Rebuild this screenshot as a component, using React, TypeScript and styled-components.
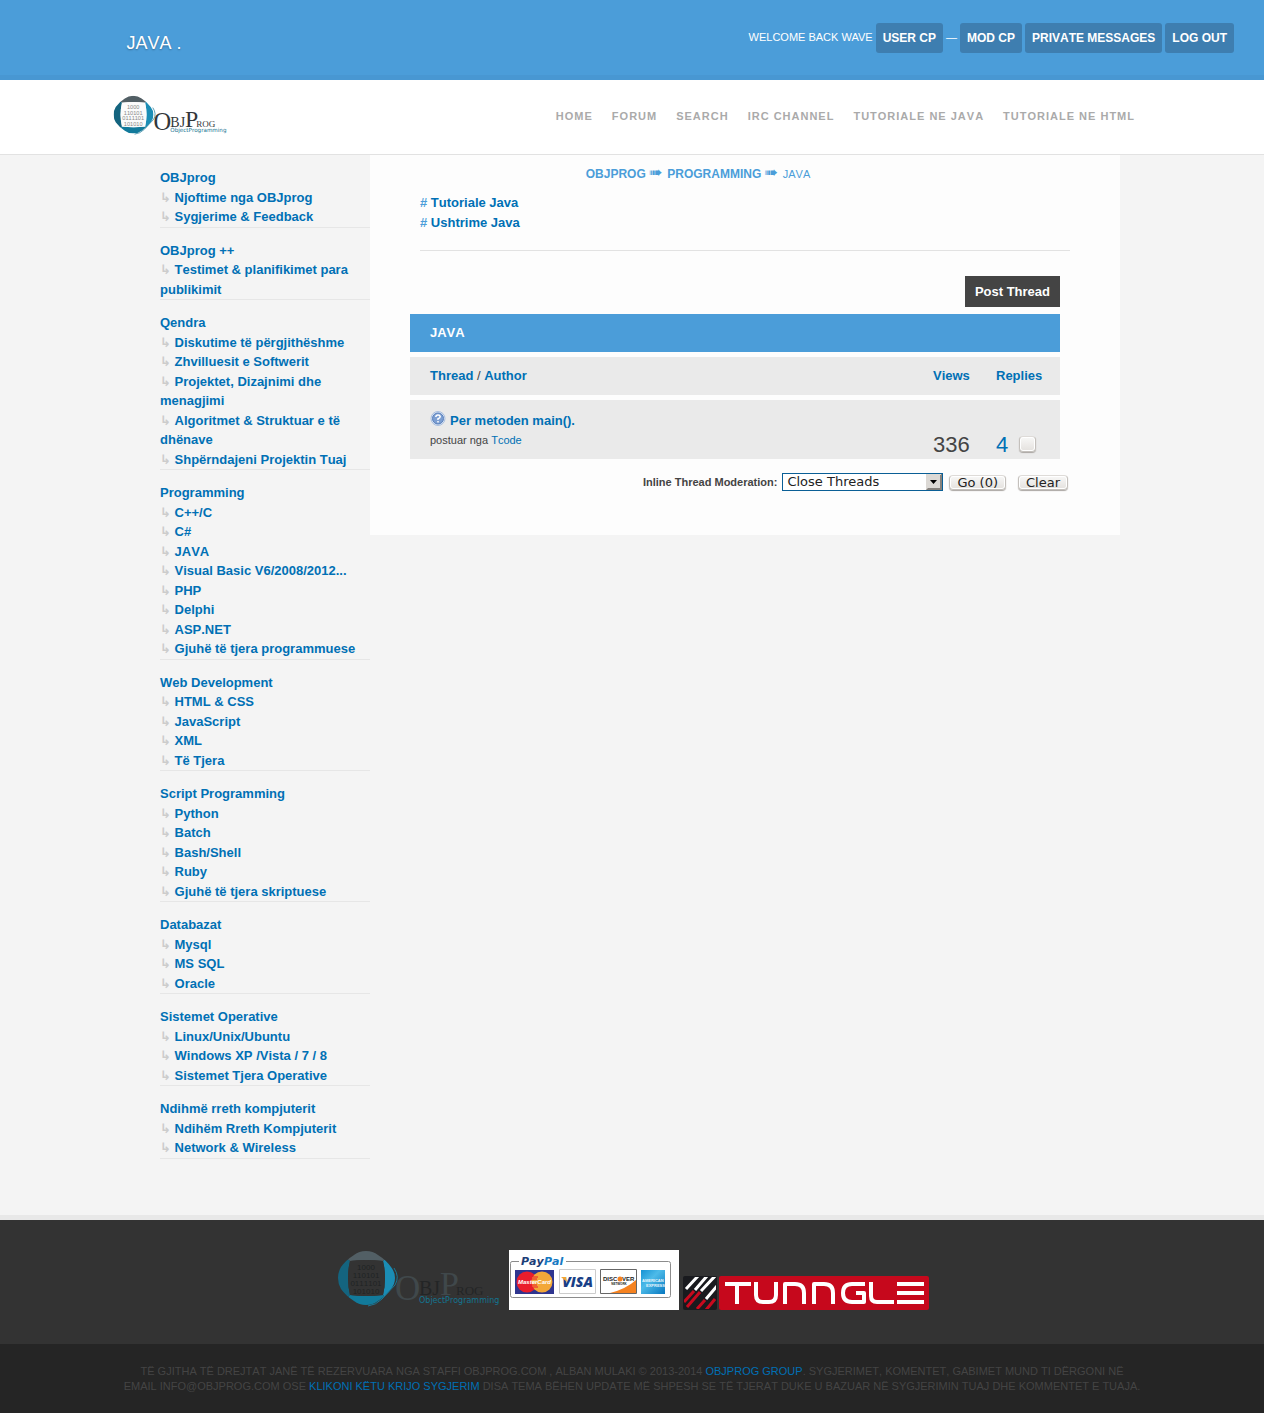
import React from 'react';
import styled, { createGlobalStyle } from 'styled-components';

const blue = '#4b9dd9';
const link = '#0070b5';

const GlobalStyle = createGlobalStyle`
  body {
    margin: 0;
    background: #f4f4f4;
    color: #444;
    font: 13px/1.5 "Liberation Sans", Arial, "DejaVu Sans", sans-serif;
    font-kerning: none;
  }
  a { color: ${link}; text-decoration: none; }
`;

const TopBar = styled.header`
  display: flex;
  justify-content: space-between;
  align-items: center;
  box-sizing: border-box;
  height: 80px;
  padding: 0 30px 0 10%;
  background: ${blue};
  border-bottom: 5px solid #4897d2;
  color: #fff;
`;

const PageTitle = styled.h1`
  margin: 0;
  padding-top: 11px;
  font-size: 18px;
  font-weight: normal;
  text-shadow: 0 1px 2px rgba(0, 0, 0, 0.3);
`;

const UserPanel = styled.div`
  display: flex;
  align-items: center;
  gap: 3px;
  font-size: 11px;
  text-transform: uppercase;
`;

const Welcome = styled.span`
  font-kerning: normal;
`;

const PanelLink = styled.a`
  padding: 0 7px;
  border-radius: 3px;
  background: #3e7eb0;
  color: #fff;
  font-size: 12px;
  font-weight: bold;
  line-height: 30px;
`;

const NavBar = styled.div`
  background: #fff;
  border-bottom: 1px solid #e2e2e2;
`;

const NavInner = styled.div`
  display: flex;
  justify-content: space-between;
  align-items: flex-start;
  box-sizing: border-box;
  max-width: 1042px;
  min-height: 74px;
  margin: 0 auto;
  padding: 15px 18px 0 0;
`;

const NavList = styled.nav`
  display: flex;
  gap: 19px;
  padding-top: 13px;
  a {
    color: #aaa;
    font-size: 11px;
    font-weight: bold;
    letter-spacing: 1px;
    text-transform: uppercase;
  }
`;

const Main = styled.main`
  display: flex;
  align-items: flex-start;
  box-sizing: border-box;
  max-width: 1040px;
  margin: 0 auto;
  padding: 0 32px 56px 48px;
`;

const Sidebar = styled.aside`
  flex: 0 0 210px;
  font-weight: bold;
`;

const Group = styled.section`
  padding-top: 13px;
  border-bottom: 1px solid #e6e6e6;
`;

const GroupTitle = styled.h2`
  margin: 0;
  font-size: 13px;
`;

const ForumList = styled.ul`
  margin: 0;
  padding: 0;
  list-style: none;
`;

const Branch = styled.span`
  color: #ccc;
`;

const Content = styled.div`
  flex: 1;
  box-sizing: border-box;
  min-height: 380px;
  padding: 8px 50px 40px;
  background: #fdfdfd;
`;

const Breadcrumb = styled.nav`
  padding-right: 94px;
  color: ${blue};
  font-size: 11px;
  line-height: 20px;
  text-align: center;
  text-transform: uppercase;
  a { color: ${blue}; font-size: 12px; font-weight: bold; }
`;

const Pointer = styled.span`
  margin-right: 2px;
  font: 16px/20px "DejaVu Sans", sans-serif;
`;

const Subforums = styled.ul`
  margin: 0;
  padding: 9px 0 17px;
  border-bottom: 1px solid #e2e2e2;
  list-style: none;
  color: ${blue};
  font-weight: bold;
  line-height: 20px;
`;

const Board = styled.div`
  margin: 25px 10px 0 -10px;
`;

const Actions = styled.div`
  display: flex;
  justify-content: flex-end;
`;

const PostButton = styled.a`
  padding: 0 10px;
  background: #444;
  color: #fff;
  font-weight: bold;
  line-height: 31px;
`;

const Threads = styled.table`
  width: 100%;
  margin-top: 2px;
  border-spacing: 0 5px;
  text-align: left;
  td, th { padding: 0; background: #eaeaea; font-weight: normal; }
  th { height: 38px; }
  th:first-child, td:first-child { padding-left: 20px; }
  tbody td { height: 59px; vertical-align: bottom; }
`;

const BoardHead = styled.tr`
  && th { background: ${blue}; color: #fff; font-weight: bold; }
`;

const NumberCol = styled.col`
  width: ${(p: { $w: number }) => p.$w}px;
`;

const Subject = styled.div`
  display: flex;
  gap: 4px;
  line-height: 20px;
  font-weight: bold;
`;

const Author = styled.div`
  padding-bottom: 10px;
  font-size: 11px;
  line-height: 18px;
`;

const Count = styled.div`
  display: flex;
  align-items: center;
  gap: 11px;
  font-size: 22px;
  line-height: 28px;
`;

const raised = `
  border: 1px solid #c4c0bc;
  border-top-color: #dedbd8;
  background: linear-gradient(#f8f8f7, #e4e1de);
  box-shadow: inset 0 0 0 1px #fff, 0 1px 1px #aaa6a2;
`;

const Tick = styled.input`
  appearance: none;
  box-sizing: border-box;
  width: 17px;
  height: 16px;
  margin: 0 0 3px;
  border-radius: 4px;
  ${raised}
  &:checked { background: ${blue}; }
`;

const Moderation = styled.form`
  display: flex;
  justify-content: flex-end;
  align-items: center;
  margin: 9px -8px 0 0;
`;

const ModLabel = styled.label`
  margin-right: 5px;
  font-size: 11px;
  font-weight: bold;
`;

const SelectBox = styled.div`
  position: relative;
  width: 161px;
  margin-right: 6px;
`;

const Select = styled.select`
  appearance: none;
  display: block;
  box-sizing: border-box;
  width: 100%;
  height: 18px;
  padding: 0 4px;
  border: 1px solid #0a5f96;
  border-radius: 0;
  background: #fff;
  color: #222;
  font: 13px/16px "DejaVu Sans", sans-serif;
`;

const SelectArrow = styled.svg`
  position: absolute;
  top: 1px;
  right: 1px;
  pointer-events: none;
`;

const ModButton = styled.button`
  height: 15px;
  margin-left: ${(p: { $gap?: number }) => p.$gap || 0}px;
  padding: 0 7px;
  border-radius: 4px;
  color: #222;
  font: 13px/13px "DejaVu Sans", sans-serif;
  ${raised}
`;

const Footer = styled.footer`
  background: #333;
  border-top: 5px solid #e8e8e8;
`;

const Partners = styled.div`
  display: flex;
  justify-content: center;
  align-items: flex-end;
  gap: 4px;
  padding: 30px 0 34px;
  svg { display: block; }
`;

const TunngleLogo = styled.svg`
  flex: none;
`;

const Legal = styled.div`
  padding: 20px 100px 19px;
  background: #252525;
  color: #444;
  font-size: 11px;
  line-height: 15px;
  text-align: center;
  text-transform: uppercase;
  p { max-width: 1040px; margin: 0 auto; }
`;

const groups: [string, string[]][] = [
  ['OBJprog', ['Njoftime nga OBJprog', 'Sygjerime & Feedback']],
  ['OBJprog ++', ['Testimet & planifikimet para publikimit']],
  ['Qendra', ['Diskutime të përgjithëshme', 'Zhvilluesit e Softwerit', 'Projektet, Dizajnimi dhe menagjimi', 'Algoritmet & Struktuar e të dhënave', 'Shpërndajeni Projektin Tuaj']],
  ['Programming', ['C++/C', 'C#', 'JAVA', 'Visual Basic V6/2008/2012...', 'PHP', 'Delphi', 'ASP.NET', 'Gjuhë të tjera programmuese']],
  ['Web Development', ['HTML & CSS', 'JavaScript', 'XML', 'Të Tjera']],
  ['Script Programming', ['Python', 'Batch', 'Bash/Shell', 'Ruby', 'Gjuhë të tjera skriptuese']],
  ['Databazat', ['Mysql', 'MS SQL', 'Oracle']],
  ['Sistemet Operative', ['Linux/Unix/Ubuntu', 'Windows XP /Vista / 7 / 8', 'Sistemet Tjera Operative']],
  ['Ndihmë rreth kompjuterit', ['Ndihëm Rreth Kompjuterit', 'Network & Wireless']],
];

const navItems = ['Home', 'Forum', 'Search', 'IRC Channel', 'Tutoriale ne Java', 'Tutoriale ne HTML'];

function Logo({ width, height, dark }: { width: number; height: number; dark?: boolean }) {
  const ink = dark ? '#232526' : '#33373a';
  const capital = dark ? '#40484b' : '#33373a';
  const id = dark ? 'core-dark' : 'core-light';
  return (
    <svg width={width} height={height} viewBox="0 0 170 60" role="img" aria-label="ObjProg">
      <defs>
        <clipPath id={id}>
          <path d="M31 1Q38 1 43 5Q51 10 56 17Q60 22 60 28T56 39Q51 46 43 51Q38 55 31 55T19 51Q11 46 6 39Q3 34 3 28T6 17Q11 10 19 5Q24 1 31 1z" />
        </clipPath>
      </defs>
      <g clipPath={`url(#${id})`}>
        <path d="M0 0h62L48 11Q31 9 15 11z" fill="#525f65" />
        <path d="M0 0l15 11q-4 17 0 34L0 58z" fill="#14647f" />
        <path d="M62 0L48 11q4 17 0 34l14 13z" fill="#1b8db5" />
        <path d="M0 60l15-15q17 2 33 0l14 15z" fill="#127a9b" />
        <path d="M15 11q16-2 33 0 4 17 0 34-17 2-33 0-4-17 0-34z" fill={dark ? '#333' : '#fbfbfb'} />
      </g>
      <path d="M59 18q6 9 1 17L47 49q-6 6-14 7" fill="none" stroke="#1b7896" strokeWidth="1" />
      <g fill={dark ? '#202324' : '#888'} fontFamily="'Liberation Sans', sans-serif" fontSize="8" textAnchor="middle">
        <text x="31" y="20">1000</text>
        <text x="31" y="28">110101</text>
        <text x="31" y="36">0111101</text>
        <text x="31" y="44">101010</text>
      </g>
      <g fill={capital} fontFamily="'Liberation Serif', serif">
        <text x="60" y="50" fontSize="35">O</text>
        <text x="105" y="45" fontSize="34">P</text>
      </g>
      <g fill={ink} fontFamily="'Liberation Serif', serif">
        <text x="84" y="45" fontSize="20">BJ</text>
        <text x="121" y="45" fontSize="13">ROG</text>
      </g>
      <text x="84" y="53" fontSize="8" fill="#147391" fontFamily="'DejaVu Sans', sans-serif">ObjectProgramming</text>
    </svg>
  );
}

function PayPalBadge() {
  return (
    <svg width="170" height="60" viewBox="0 0 170 60" role="img" aria-label="PayPal">
      <defs>
        <linearGradient id="amex" x1="0" y1="0" x2="1" y2="1">
          <stop offset="0" stopColor="#1692d4" />
          <stop offset="0.4" stopColor="#4dbbe9" />
          <stop offset="1" stopColor="#0878c0" />
        </linearGradient>
      </defs>
      <path d="M0 0h170v60H0z" fill="#fff" />
      <path d="M10 11.500H3q-1.500 0-1.500 2v32q0 2 2 2h156q2 0 2-2v-32q0-2-2-2H57" fill="none" stroke="#8c8c8c" />
      <g fontFamily="'DejaVu Sans', sans-serif" fontStyle="italic" fontWeight="bold" fontSize="11">
        <text x="12" y="15" fill="#1d3e78">Pay</text>
        <text x="35" y="15" fill="#1679c2">Pal</text>
      </g>
      <path d="M6 20h39v24H6z" fill="#2f358f" />
      <circle cx="18" cy="32" r="10.500" fill="#ea1d2c" />
      <circle cx="33" cy="32" r="10.500" fill="#f3a738" />
      <path d="M24 27h5M23 29h5M23 35h5M24 37h5" stroke="#ea1d2c" />
      <text x="25.500" y="34" fill="#fff" fontFamily="'Liberation Sans', sans-serif" fontStyle="italic" fontWeight="bold" fontSize="6" textAnchor="middle">MasterCard</text>
      <path d="M50.500 19.500h36v24h-36z" fill="#fff" stroke="#ccc" />
      <text x="68.500" y="37" fill="#193f86" fontFamily="'Open Sans', sans-serif" fontStyle="italic" fontWeight="800" fontSize="14" textAnchor="middle">VISA</text>
      <path d="M52 27h5l1 5z" fill="#f2a534" />
      <path d="M91.500 19.500h36v24h-36z" fill="#fff" stroke="#666" />
      <path d="M101 43q16-4 26-13v13z" fill="#f58220" />
      <g fill="#222" fontFamily="'Liberation Sans', sans-serif" fontWeight="bold">
        <text x="94" y="31" fontSize="6">DISC</text>
        <text x="113" y="31" fontSize="6">VER</text>
        <text x="110" y="35" fontSize="3" textAnchor="middle">NETWORK</text>
      </g>
      <circle cx="111" cy="29" r="2.500" fill="#f58220" />
      <path d="M132 20h24v24h-24z" fill="url(#amex)" />
      <g fill="#e9f6fd" fontFamily="'Liberation Sans', sans-serif" fontWeight="bold" fontSize="4">
        <text x="133" y="32">AMERICAN</text>
        <text x="137" y="37">EXPRESS</text>
      </g>
    </svg>
  );
}

function TunngleBadge() {
  return (
    <TunngleLogo width="246" height="34" viewBox="0 0 246 34" role="img" aria-label="Tunngle">
      <defs>
        <clipPath id="tile"><rect x="1" y="1" width="32" height="32" /></clipPath>
      </defs>
      <rect width="34" height="34" rx="2" fill="#191a1e" />
      <g clipPath="url(#tile)" strokeWidth="3" fill="none">
        <path d="M1 26l10-11M4 31l13-15M14 33l8-9M23 34l9-11" stroke="#c80a1e" />
        <path d="M3 13L15 0M12 14L24 0M18 15L32 0M23 23L34 10" stroke="#fff" />
      </g>
      <rect x="36" width="210" height="34" rx="2" fill="#c6081c" />
      <g fill="none" stroke="#fff" strokeWidth="4" strokeLinejoin="round">
        <path d="M42 8h26M54 8v20" />
        <path d="M73 6v13q0 7 7 7h6q7 0 7-7V6" />
        <path d="M102 28V8h10q9 0 9 9v11" />
        <path d="M131 28V8h10q9 0 9 9v11" />
        <path d="M182 8h-13q-9 0-9 9t9 9h12v-9h-8" />
        <path d="M188 6v14q0 6 6 6h17" />
        <path d="M214 8h27M214 17h27M214 26h27" />
      </g>
    </TunngleLogo>
  );
}

function QuestionIcon() {
  return (
    <svg width="16" height="16" viewBox="0 0 16 16" aria-hidden="true">
      <circle cx="8" cy="7.500" r="7" fill="#dce6f4" stroke="#a9bfdf" />
      <circle cx="8" cy="7.500" r="5.500" fill="#7d9fd2" stroke="#5a80bc" />
      <path d="M5.800 6q.2-2 2.200-2t2.200 1.700Q10.200 7 8 7.700V9M8 10v1.600" fill="none" stroke="#fff" strokeWidth="1.500" />
    </svg>
  );
}

export default function App() {
  return (
    <>
      <GlobalStyle />
      <TopBar>
        <PageTitle>JAVA .</PageTitle>
        <UserPanel>
          <Welcome>Welcome back wave</Welcome>
          <PanelLink href="#usercp">User CP</PanelLink>
          <span>—</span>
          <PanelLink href="#modcp">Mod CP</PanelLink>
          <PanelLink href="#messages">Private Messages</PanelLink>
          <PanelLink href="#logout">Log Out</PanelLink>
        </UserPanel>
      </TopBar>
      <NavBar>
        <NavInner>
          <a href="#home"><Logo width={120} height={42} /></a>
          <NavList>
            {navItems.map((item) => <a key={item} href="#nav">{item}</a>)}
          </NavList>
        </NavInner>
      </NavBar>
      <Main>
        <Sidebar>
          {groups.map(([title, forums]) => (
            <Group key={title}>
              <GroupTitle><a href="#category">{title}</a></GroupTitle>
              <ForumList>
                {forums.map((forum) => (
                  <li key={forum}><Branch>↳</Branch> <a href="#forum">{forum}</a></li>
                ))}
              </ForumList>
            </Group>
          ))}
        </Sidebar>
        <Content>
          <Breadcrumb>
            <a href="#index">OBJprog</a> <Pointer>➠</Pointer> <a href="#programming">Programming</a> <Pointer>➠</Pointer> JAVA
          </Breadcrumb>
          <Subforums>
            <li># <a href="#tutoriale">Tutoriale Java</a></li>
            <li># <a href="#ushtrime">Ushtrime Java</a></li>
          </Subforums>
          <Board>
            <Actions><PostButton href="#post">Post Thread</PostButton></Actions>
            <Threads>
              <colgroup><col /><NumberCol $w={63} /><NumberCol $w={64} /></colgroup>
              <thead>
                <BoardHead><th colSpan={3}>JAVA</th></BoardHead>
                <tr>
                  <th><a href="#subject"><b>Thread</b></a> / <a href="#starter"><b>Author</b></a></th>
                  <th><a href="#views"><b>Views</b></a></th>
                  <th><a href="#replies"><b>Replies</b></a></th>
                </tr>
              </thead>
              <tbody>
                <tr>
                  <td>
                    <Subject><QuestionIcon /><a href="#thread">Per metoden main().</a></Subject>
                    <Author>postuar nga <a href="#tcode">Tcode</a></Author>
                  </td>
                  <td><Count>336</Count></td>
                  <td><Count><a href="#who">4</a><Tick type="checkbox" aria-label="Select thread" /></Count></td>
                </tr>
              </tbody>
            </Threads>
            <Moderation onSubmit={(e) => e.preventDefault()}>
              <ModLabel htmlFor="moderation">Inline Thread Moderation:</ModLabel>
              <SelectBox>
                <Select id="moderation"><option>Close Threads</option></Select>
                <SelectArrow width="16" height="16" viewBox="0 0 16 16" aria-hidden="true">
                  <path d="M0 0h16v16H0z" fill="#dcd9d5" />
                  <path d="M15 0v15H0l1 1h15V0zM14 1v13H1l1 1h13V1z" fill="#85817c" />
                  <path d="M4 6h7L7.500 10z" fill="#000" />
                </SelectArrow>
              </SelectBox>
              <ModButton type="submit">Go (0)</ModButton>
              <ModButton type="button" $gap={12}>Clear</ModButton>
            </Moderation>
          </Board>
        </Content>
      </Main>
      <Footer>
        <Partners>
          <Logo width={170} height={60} dark />
          <PayPalBadge />
          <TunngleBadge />
        </Partners>
        <Legal>
          <p>
            Të gjitha të drejtat janë të rezervuara nga staffi OBJprog.com , Alban Mulaki © 2013-2014 <a href="#group">OBJprog Group</a>. Sygjerimet, komentet, gabimet mund ti dërgoni në
            <br />
            email info@objprog.com ose <a href="#suggest">klikoni këtu krijo sygjerim</a> disa tema bëhen update më shpesh se të tjerat duke u bazuar në sygjerimin tuaj dhe kommentet e tuaja.
          </p>
        </Legal>
      </Footer>
    </>
  );
}
